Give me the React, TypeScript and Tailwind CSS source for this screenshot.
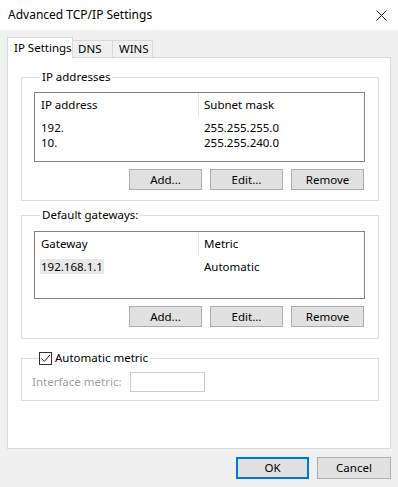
import React from 'react';

const IP_ROWS = [
  { ip: '192.', mask: '255.255.255.0' },
  { ip: '10.', mask: '255.255.240.0' },
];

function Btn({ label }: { label: string }) {
  return (
    <button className="w-[73px] h-[21px] flex items-center justify-center bg-[#e1e1e1] text-black border border-[#adadad]">
      {label}
    </button>
  );
}

function ListView({
  cols,
  rows,
  height,
  selected = -1,
}: {
  cols: [string, string];
  rows: [string, string][];
  height: string;
  selected?: number;
}) {
  return (
    <div className={`${height} border border-[#828282] bg-white`}>
      <div className="flex h-[24px] items-center">
        <div className="w-[164px] pl-[6px] h-full flex items-center border-r border-[#e5e5e5]">{cols[0]}</div>
        <div className="pl-[5px]">{cols[1]}</div>
      </div>
      <div className="pt-[3px]">
        {rows.map((r, i) => (
          <div key={i} className="flex h-[15px] leading-[15px] items-center">
            <div className="w-[164px] pl-[5px]">
              <span className={`px-px ${i === selected ? 'bg-[#e8e8e8]' : ''}`}>{r[0]}</span>
            </div>
            <div className="pl-[5px]">{r[1]}</div>
          </div>
        ))}
      </div>
    </div>
  );
}

function ButtonRow() {
  return (
    <div className="flex justify-end gap-[8px] mt-[7px] pr-px">
      <Btn label="Add..." />
      <Btn label="Edit..." />
      <Btn label="Remove" />
    </div>
  );
}

export default function App() {
  return (
    <div className="w-[398px] h-[487px] bg-[#f0f0f0] flex flex-col text-[11.5px] leading-[16px] text-black font-['Segoe_UI','Noto_Sans',sans-serif]">
      {/* title bar */}
      <div className="h-[30px] bg-white flex items-center justify-between pl-[8px] pr-[10px] shrink-0">
        <span className="text-[12px]">Advanced TCP/IP Settings</span>
        <svg width="11" height="11" viewBox="0 0 11 11" className="mr-[1px]">
          <path d="M0.5 0.5 L10.5 10.5 M10.5 0.5 L0.5 10.5" stroke="#222" strokeWidth="1" fill="none" />
        </svg>
      </div>

      <div className="px-[7px] pt-[7px] flex flex-col">
        {/* tabs */}
        <div className="flex items-end h-[21px] relative z-10 whitespace-nowrap">
          <div className="h-[21px] w-[66px] bg-white border border-b-0 border-[#d9d9d9] flex items-center pl-[6px]">
            IP Settings
          </div>
          <div className="h-[17px] w-[40px] border-t border-r border-[#d9d9d9] flex items-center pl-[5px] mb-px">DNS</div>
          <div className="h-[17px] w-[40px] border-t border-r border-[#d9d9d9] flex items-center pl-[6px] mb-px">WINS</div>
        </div>

        {/* panel */}
        <div className="h-[392px] -mt-px bg-white border border-[#d9d9d9] pl-[13px] pr-[11px] pt-[11px]">
          <fieldset className="border border-[#dcdcdc] pl-[12px] pr-[13px] pb-[10px]">
            <legend className="ml-[6px] px-[2px]">IP addresses</legend>
            <div className="mt-[7px]">
              <ListView
                cols={['IP address', 'Subnet mask']}
                rows={IP_ROWS.map(r => [r.ip, r.mask] as [string, string])}
                height="h-[70px]"
              />
            </div>
            <ButtonRow />
          </fieldset>

          <fieldset className="mt-[6px] border border-[#dcdcdc] pl-[12px] pr-[13px] pb-[11px]">
            <legend className="ml-[6px] px-[2px]">Default gateways:</legend>
            <div className="mt-[8px]">
              <ListView
                cols={['Gateway', 'Metric']}
                rows={[['192.168.1.1', 'Automatic']]}
                height="h-[68px]"
                selected={0}
              />
            </div>
            <div className="mt-[1px]">
              <ButtonRow />
            </div>
          </fieldset>

          <fieldset className="mt-[11px] border border-[#dcdcdc] pl-[10px] pb-[8px]">
            <legend className="ml-[7px] pr-[2px] flex items-center gap-[3px]">
              <span className="w-[13px] h-[13px] border border-[#333] bg-white flex items-center justify-center">
                <svg width="11" height="11" viewBox="0 0 11 11">
                  <path d="M1.5 5.5 L4.3 8.5 L9.8 2" stroke="#222" strokeWidth="1" fill="none" />
                </svg>
              </span>
              <span>Automatic metric</span>
            </legend>
            <div className="flex items-center mt-[6px]">
              <span className="w-[98px] text-[#a0a0a0]">Interface metric:</span>
              <div className="w-[75px] h-[20px] border border-[#cccccc] bg-white" />
            </div>
          </fieldset>
        </div>

        {/* dialog buttons */}
        <div className="flex justify-end gap-[8px] mt-[8px]">
          <button className="w-[73px] h-[22px] flex items-center justify-center bg-[#e1e1e1] border-2 border-[#0078d7]">
            OK
          </button>
          <button className="w-[74px] h-[22px] flex items-center justify-center bg-[#e1e1e1] border border-[#adadad]">
            Cancel
          </button>
        </div>
      </div>
    </div>
  );
}
